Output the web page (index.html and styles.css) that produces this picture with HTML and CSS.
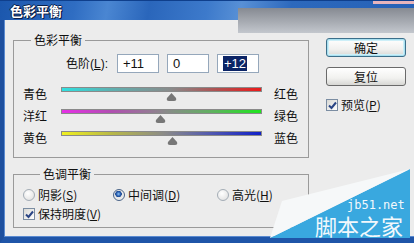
FILE: index.html
```html
<!DOCTYPE html>
<html lang="zh-CN">
<head>
    <meta charset="UTF-8">
    <meta name="viewport" content="width=device-width, initial-scale=1.0">
    <title>色彩平衡</title>
    <link rel="stylesheet" href="styles.css">
</head>
<body>
    <div class="window">
        <div class="titlebar">
            <span class="title">色彩平衡</span>
        </div>
        <div class="client">
            <div class="panels">
                <fieldset class="group color-group">
                    <legend>色彩平衡</legend>
                    <div class="levels">
                        <span class="levels-label">色阶(<u>L</u>):</span>
                        <span class="field">+11</span>
                        <span class="field">0</span>
                        <span class="field"><span class="selected">+12</span></span>
                    </div>
                    <div class="slider-row">
                        <span class="side-label">青色</span>
                        <div class="track">
                            <div class="bar cyan-red"></div>
                            <svg class="thumb" style="left:105px" width="11" height="8" viewBox="0 0 11 8"><path d="M5.5 0 L10 5 Q11 8 8 8 L3 8 Q0 8 1 5 Z"/></svg>
                        </div>
                        <span class="side-label end">红色</span>
                    </div>
                    <div class="slider-row">
                        <span class="side-label">洋红</span>
                        <div class="track">
                            <div class="bar magenta-green"></div>
                            <svg class="thumb" style="left:94px" width="11" height="8" viewBox="0 0 11 8"><path d="M5.5 0 L10 5 Q11 8 8 8 L3 8 Q0 8 1 5 Z"/></svg>
                        </div>
                        <span class="side-label end">绿色</span>
                    </div>
                    <div class="slider-row">
                        <span class="side-label">黄色</span>
                        <div class="track">
                            <div class="bar yellow-blue"></div>
                            <svg class="thumb" style="left:106px" width="11" height="8" viewBox="0 0 11 8"><path d="M5.5 0 L10 5 Q11 8 8 8 L3 8 Q0 8 1 5 Z"/></svg>
                        </div>
                        <span class="side-label end">蓝色</span>
                    </div>
                </fieldset>

                <fieldset class="group tone-group">
                    <legend>色调平衡</legend>
                    <div class="radios">
                        <span class="radio-item shadows"><span class="radio"></span>阴影(<u>S</u>)</span>
                        <span class="radio-item midtones"><span class="radio checked"></span>中间调(<u>D</u>)</span>
                        <span class="radio-item"><span class="radio"></span>高光(<u>H</u>)</span>
                    </div>
                    <div class="check-item">
                        <span class="checkbox"><svg width="9" height="9" viewBox="0 0 9 9"><path d="M1 4.5 L3.5 7 L8 1.5"/></svg></span>保持明度(<u>V</u>)
                    </div>
                </fieldset>
            </div>

            <div class="actions">
                <button class="btn default">确定</button>
                <button class="btn">复位</button>
                <div class="check-item preview">
                    <span class="checkbox"><svg width="9" height="9" viewBox="0 0 9 9"><path d="M1 4.5 L3.5 7 L8 1.5"/></svg></span>预览(<u>P</u>)
                </div>
            </div>
        </div>

        <!-- stray window piece lying over the title bar -->
        <div class="glare"></div>

        <svg class="watermark" width="150" height="79" viewBox="0 0 150 79">
            <polygon class="wm-blue" points="146,5 146,74 6,74"/>
            <polygon class="wm-white" points="18,37 146,5 6,74"/>
            <text class="wm-url" x="83" y="45">jb51.net</text>
            <text class="wm-name" x="51" y="71">脚本之家</text>
        </svg>
    </div>
</body>
</html>
```

FILE: styles.css
```css
body, html {
    margin: 0;
    padding: 0;
    background-color: #ececec;
    font-family: "Liberation Sans", "Noto Sans CJK SC", sans-serif;
    font-size: 12px;
    color: #111;
}
.window {
    position: relative;
    width: 414px;
    height: 243px;
    overflow: hidden;
    background-color: #ececec;
}

/* title bar */
.titlebar {
    position: relative;
    height: 20px;
    background: linear-gradient(100deg, #1b57ad 0%, #2f6dc2 18%, #4a86d2 26%, #2a66bb 36%, #3d7acb 50%, #5890d6 58%, #2d69bd 70%, #2561b6 100%);
    border-top: 1px solid #0f3f8c;
    box-sizing: border-box;
}
.titlebar::after {
    content: "";
    position: absolute;
    right: 0;
    top: 0;
    width: 41px;
    height: 3px;
    background: #e6b4bc;
}
.title {
    position: absolute;
    left: 10px;
    top: 2px;
    font-family: "Noto Sans CJK SC", sans-serif;
    font-size: 13px;
    font-weight: bold;
    line-height: 16px;
    color: #fff;
    text-shadow: 1px 1px 0 #0b1f48, -1px 0 0 #0b1f48, 0 -1px 0 #0b1f48, 1px 0 0 #0b1f48;
}
.glare {
    position: absolute;
    left: 238px;
    top: 8px;
    width: 176px;
    height: 25px;
    background: linear-gradient(to bottom, #868a92, #a7abb2 55%, #c3c7cd);
}

/* client area */
.client {
    display: flex;
    align-items: flex-start;
    height: 223px;
    box-sizing: border-box;
    padding: 13px 0 0 9px;
    border-left: 4px solid #1d4f9e;
    border-bottom: 6px solid #1f55a8;
    box-shadow: inset 1px 0 0 #5a8ad0, inset 0 -1px 0 #5a8ad0;
}
.panels {
    width: 296px;
}
.group {
    margin: 0;
    padding: 0;
    min-width: 0;
    border: 1px solid #9a9a9a;
}
.group legend {
    margin-left: 17px;
    padding: 0 3px;
    line-height: 14px;
    font-family: "Noto Sans CJK SC", sans-serif;
}
.color-group {
    padding: 7px 0 9px 0;
}
.tone-group {
    margin-top: 9px;
    padding: 7px 0 6px 9px;
}

/* levels inputs */
.levels {
    display: flex;
    align-items: center;
    height: 19px;
}
.levels-label {
    width: 94px;
    margin-right: 9px;
    text-align: right;
    line-height: 14px;
}
.field {
    box-sizing: border-box;
    width: 42px;
    height: 19px;
    margin-right: 8px;
    padding: 1px 0 0 5px;
    border: 1px solid #95a7bb;
    background: #fff;
    font-size: 13px;
    line-height: 15px;
}
.selected {
    display: inline-block;
    padding: 0 1px;
    background: #0b2466;
    color: #fff;
}

/* sliders */
.slider-row {
    display: flex;
    align-items: center;
    height: 22px;
    padding-left: 9px;
}
.levels + .slider-row {
    margin-top: 9px;
}
.side-label {
    width: 24px;
    line-height: 14px;
    padding-top: 2px;
    font-family: "Noto Sans CJK SC", sans-serif;
}
.side-label.end {
    margin-left: 12px;
}
.track {
    position: relative;
    width: 201px;
    height: 22px;
    margin-left: 14px;
}
.bar {
    box-sizing: border-box;
    margin-top: 5px;
    height: 5px;
    border: 1px solid #8a8a8a;
}
.cyan-red {
    background: linear-gradient(to right, #2fe0e0, #5fb0b0 25%, #8a8a8a 55%, #b05050 78%, #ec1a1a);
}
.magenta-green {
    background: linear-gradient(to right, #e630e6, #b050b0 25%, #8a8a8a 52%, #60b060 75%, #1ee61e);
}
.yellow-blue {
    background: linear-gradient(to right, #f0f020, #b8b848 25%, #8a8a8a 52%, #5058b0 75%, #1020c8);
}
.thumb {
    position: absolute;
    top: 11px;
    fill: #777;
}

/* radios and checkboxes */
.radios {
    display: flex;
    align-items: center;
    height: 14px;
}
.radio-item, .check-item {
    display: flex;
    align-items: center;
    line-height: 14px;
    font-family: "Noto Sans CJK SC", sans-serif;
}
.radio-item.shadows {
    width: 90px;
}
.radio-item.midtones {
    width: 104px;
}
.radio {
    box-sizing: border-box;
    width: 12px;
    height: 12px;
    margin-right: 3px;
    border: 1px solid #a4adb6;
    border-radius: 50%;
    background: radial-gradient(circle at 40% 35%, #ffffff, #dcdcdc);
}
.radio.checked {
    border-color: #4a6488;
    background: radial-gradient(circle at 45% 40%, #8fc4f4 0, #2c63b4 2px, #1c4790 3px, #e6e6e6 3.5px, #f4f4f4);
}
.check-item {
    margin-top: 5px;
}
.checkbox {
    box-sizing: border-box;
    display: flex;
    align-items: center;
    justify-content: center;
    width: 12px;
    height: 12px;
    margin-right: 3px;
    border: 1px solid #7b8da2;
    background: linear-gradient(135deg, #d8d8d4, #ffffff);
}
.checkbox svg {
    fill: none;
    stroke: #2a4585;
    stroke-width: 2;
}

/* buttons */
.actions {
    width: 80px;
    margin-left: 17px;
    padding-top: 5px;
}
.btn {
    display: block;
    box-sizing: border-box;
    width: 80px;
    height: 19px;
    margin: 0 0 10px 0;
    padding: 0;
    border: 1px solid #6a6a6a;
    border-radius: 3px;
    background: linear-gradient(to bottom, #ffffff, #f1f1ef 60%, #d7d7d4);
    font-family: "Noto Sans CJK SC", sans-serif;
    font-size: 12px;
    line-height: 15px;
    color: #111;
}
.btn.default {
    border-color: #3c6f8a;
    box-shadow: inset 0 0 0 1px #a9e0f0, inset 0 0 0 2px #cdeff8;
}
.preview {
    margin-top: 12px;
}

/* site watermark */
.watermark {
    position: absolute;
    left: 264px;
    top: 164px;
}
.wm-blue {
    fill: #39a8df;
}
.wm-white {
    fill: #f6f8f9;
}
.wm-url {
    fill: #f2f8fc;
    font-family: "DejaVu Sans Mono", monospace;
    font-size: 12px;
}
.wm-name {
    fill: #f2f8fc;
    font-family: "Noto Sans CJK SC", sans-serif;
    font-size: 22px;
}
```
